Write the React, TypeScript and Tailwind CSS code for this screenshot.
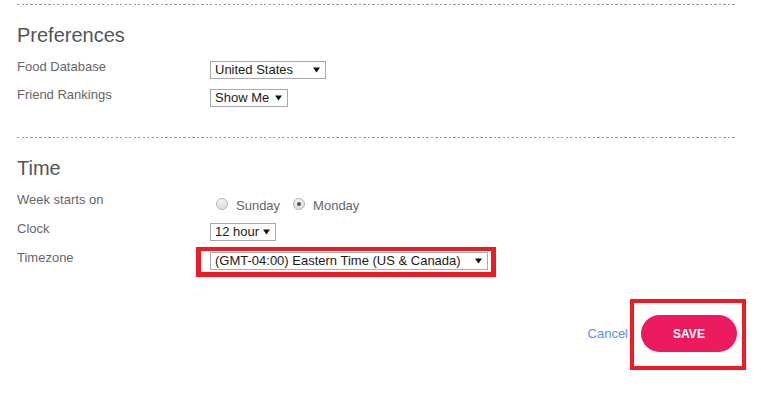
import type { ReactNode } from "react"

function Dashed() {
  return <div className="h-px w-[720px] bg-[repeating-linear-gradient(90deg,#9a9a9a_0_2px,transparent_2px_4.5px)]" />
}

function Arrow() {
  return (
    <svg width="7" height="6" viewBox="0 0 7 6" className="shrink-0">
      <path d="M0 0.5 H7 L3.5 5.5 Z" fill="#111" />
    </svg>
  )
}

function Select({ value, className }: { value: string; className: string }) {
  return (
    <div
      className={`flex h-[18px] items-center justify-between border border-[#a9a9a9] bg-white pl-[4px] pr-[5px] text-[13px] leading-[16px] text-[#1a1a1a] ${className}`}
    >
      <span className="whitespace-nowrap">{value}</span>
      <Arrow />
    </div>
  )
}

function Radio({ checked }: { checked?: boolean }) {
  return (
    <span className="mt-px flex h-[12px] w-[12px] items-center justify-center rounded-full border border-[#b4b4b4] bg-[linear-gradient(#f4f4f4,#dcdcdc)]">
      {checked && <span className="h-[4px] w-[4px] rounded-full bg-[#555]" />}
    </span>
  )
}

function Row({ label, height, offset, children }: { label: string; height: string; offset: string; children: ReactNode }) {
  return (
    <div className={`flex items-start ${height}`}>
      <div className="w-[193px] text-[13px] leading-[18px] text-[#666]">{label}</div>
      <div className={offset}>{children}</div>
    </div>
  )
}

export default function App() {
  return (
    <div className="h-[410px] w-[761px] overflow-hidden bg-white font-['Liberation_Sans',Arial,sans-serif]">
      <div className="ml-[17px] w-[720px] pt-[4px]">
        <Dashed />
        <h2 className="mt-[19px] text-[20px] leading-[23px] text-[#555]">Preferences</h2>
        <div className="mt-[11px]">
          <Row label="Food Database" height="h-[28px]" offset="mt-[3px]">
            <Select value="United States" className="w-[116px]" />
          </Row>
          <Row label="Friend Rankings" height="h-[28px]" offset="mt-[3px]">
            <Select value="Show Me" className="w-[78px]" />
          </Row>
        </div>
        <div className="mt-[23px]">
          <Dashed />
        </div>
        <h2 className="mt-[19px] text-[20px] leading-[23px] text-[#555]">Time</h2>
        <div className="mt-[11px]">
          <Row label="Week starts on" height="h-[29px]" offset="mt-[6px]">
            <div className="ml-[6px] flex items-start text-[13px] leading-[18px] text-[#666]">
              <Radio />
              <span className="ml-[8px]">Sunday</span>
              <span className="ml-[13px]">
                <Radio checked />
              </span>
              <span className="ml-[8px]">Monday</span>
            </div>
          </Row>
          <Row label="Clock" height="h-[29px]" offset="mt-[3px]">
            <Select value="12 hour" className="w-[66px]" />
          </Row>
          <Row label="Timezone" height="h-[29px]" offset="mt-[3px]">
            <div className="relative">
              <Select value="(GMT-04:00) Eastern Time (US & Canada)" className="w-[278px]" />
              <span className="pointer-events-none absolute -bottom-[7px] -left-[14px] -right-[8px] -top-[5px] border-[5px] border-t-4 border-[#ed1c24]" />
            </div>
          </Row>
        </div>
        <div className="mt-[37px] flex items-center justify-end">
          <a className="text-[13px] leading-[16px] text-[#5b8def]">Cancel</a>
          <div className="relative ml-[13px]">
            <button className="flex h-[37px] w-[96px] items-center justify-center rounded-full bg-[#ec1a5e] text-[12px] font-bold text-white">
              SAVE
            </button>
            <span className="pointer-events-none absolute -bottom-[18px] -left-[11px] -right-[9px] -top-[16px] border-4 border-[#ed1c24]" />
          </div>
        </div>
      </div>
    </div>
  )
}
